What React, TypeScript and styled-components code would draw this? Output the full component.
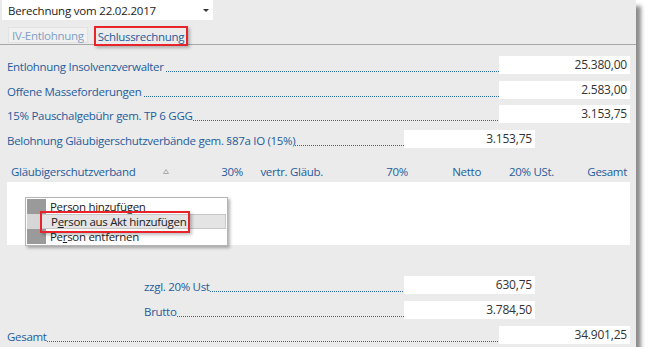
import styled, { createGlobalStyle } from 'styled-components'

const GlobalStyle = createGlobalStyle`
  body {
    margin: 0;
    background: #ffffff;
    font-family: "Open Sans", "Liberation Sans", sans-serif;
    font-size: 11.5px;
    letter-spacing: -0.3px;
  }
`

const Window = styled.div`
  width: 636px;
  height: 347px;
  background: #ebebeb;
  box-shadow: 5px 6px 4px rgba(0, 0, 0, 0.45);
  display: flex;
  flex-direction: column;
`

const Select = styled.div`
  margin-left: 2px;
  width: 211px;
  height: 20px;
  background: #ffffff;
  display: flex;
  align-items: center;
  justify-content: space-between;
  padding: 0 4px 0 6px;
  box-sizing: border-box;
  color: #222;
  letter-spacing: -0.2px;
`

const Caret = styled.span`
  width: 0;
  height: 0;
  border-left: 3px solid transparent;
  border-right: 3px solid transparent;
  border-top: 3px solid #333;
`

const TabBar = styled.div`
  margin-top: 6px;
  height: 18px;
  border-bottom: 1px solid #a8a8a8;
  display: flex;
  align-items: flex-start;
  gap: 6px;
  padding-left: 8px;
`

const Tab = styled.div<{ $active?: boolean }>`
  height: ${p => (p.$active ? '20px' : '16px')};
  margin-top: ${p => (p.$active ? '0' : '1px')};
  padding: 0 ${p => (p.$active ? '2px' : '3px')};
  box-sizing: border-box;
  display: flex;
  align-items: center;
  color: ${p => (p.$active ? '#1f5c9c' : '#7f9fc2')};
  background: ${p => (p.$active ? '#ebebeb' : '#f1f1f1')};
  border: ${p => (p.$active ? '2px solid #e8232a' : '1px solid #e2e2e2')};
  box-shadow: ${p => (p.$active ? '2px 2px 3px rgba(0,0,0,0.25)' : 'none')};
  position: relative;
  z-index: 1;
`

const Content = styled.div`
  padding: 11px 6px 0 7px;
  display: flex;
  flex-direction: column;
`

const Rows = styled.div<{ $gap: number; $top?: number }>`
  display: flex;
  flex-direction: column;
  gap: ${p => p.$gap}px;
  margin-top: ${p => p.$top ?? 0}px;
`

const Row = styled.div<{ $indent?: number; $short?: boolean }>`
  display: flex;
  align-items: flex-end;
  height: 18px;
  padding-left: ${p => p.$indent ?? 0}px;
  margin-right: ${p => (p.$short ? '95px' : '0')};
`

const Label = styled.span`
  color: #1f5c9c;
  line-height: 15px;
  white-space: pre;
`

const Leader = styled.span`
  flex: 1;
  height: 1px;
  margin-bottom: 2px;
  background: repeating-linear-gradient(to right, #2f6aa8 0 1px, transparent 1px 2px);
`

const Value = styled.div`
  width: 131px;
  height: 18px;
  background: #ffffff;
  color: #333;
  font-size: 12px;
  letter-spacing: -0.2px;
  text-align: right;
  line-height: 18px;
  padding-right: 3px;
  box-sizing: border-box;
`

const Header = styled.div`
  margin-top: 14px;
  height: 20px;
  display: grid;
  grid-template-columns: 150px 30px 56px 80px 85px 73px 73px 73px;
  color: #1f5c9c;
  line-height: 20px;
  margin-right: 3px;
`

const HeadCell = styled.div<{ $left?: boolean }>`
  text-align: ${p => (p.$left ? 'left' : 'right')};
  padding-left: ${p => (p.$left ? '4px' : '0')};
  white-space: nowrap;
`

const SortCell = styled.div`
  display: flex;
  align-items: center;
  padding-left: 6px;
`

const TableBody = styled.div`
  height: 63px;
  background: #ffffff;
  position: relative;
`

const Menu = styled.div`
  position: absolute;
  left: 18px;
  top: 15px;
  width: 203px;
  padding: 1px;
  box-sizing: border-box;
  background: #ffffff;
  border: 1px solid #b5b5b5;
  box-shadow: 2px 2px 3px rgba(0, 0, 0, 0.3);
  display: flex;
  flex-direction: column;
`

const MenuItem = styled.div`
  height: 15px;
  display: flex;
  align-items: center;
  color: #222;
`

const MenuIcon = styled.span<{ $hover?: boolean }>`
  width: 19px;
  height: 15px;
  background: ${p => (p.$hover ? '#d6d6d6' : '#9a9a9a')};
  margin-right: ${p => (p.$hover ? '0' : '4px')};
  flex: none;
`

const MenuText = styled.span<{ $hover?: boolean }>`
  flex: 1;
  height: 15px;
  line-height: 13px;
  padding-left: ${p => (p.$hover ? '10px' : '0')};
  margin-left: ${p => (p.$hover ? '-6px' : '0')};
  background: ${p => (p.$hover ? '#e4e4e4' : 'transparent')};
  border: ${p => (p.$hover ? '1px solid #c8c8c8' : 'none')};
  box-sizing: border-box;
  display: flex;
  align-items: center;
  white-space: pre;
`

const Marked = styled.span`
  position: relative;
  &::after {
    content: '';
    position: absolute;
    left: -11px;
    right: -4px;
    top: -4px;
    bottom: -5px;
    border: 2px solid #e8232a;
    box-shadow: 2px 2px 3px rgba(0, 0, 0, 0.25);
  }
`

const rowsTop = [
  { label: 'Entlohnung Insolvenzverwalter ', value: '25.380,00' },
  { label: 'Offene Masseforderungen ', value: '2.583,00' },
  { label: '15% Pauschalgebühr gem. TP 6 GGG', value: '3.153,75' },
  { label: 'Belohnung Gläubigerschutzverbände gem. §87a IO (15%)', value: '3.153,75', short: true },
]

function SortIcon() {
  return (
    <svg width="6" height="5" viewBox="0 0 6 5">
      <path d="M3 0.5 L5.5 4.5 L0.5 4.5 Z" fill="none" stroke="#9a9a9a" strokeWidth="0.8" />
    </svg>
  )
}

export default function App() {
  return (
    <>
      <GlobalStyle />
      <Window>
        <Select>
          <span>Berechnung vom 22.02.2017</span>
          <Caret />
        </Select>
        <TabBar>
          <Tab>IV-Entlohnung</Tab>
          <Tab $active>Schlussrechnung</Tab>
        </TabBar>
        <Content>
          <Rows $gap={6.5}>
            {rowsTop.map(r => (
              <Row key={r.label} $short={r.short}>
                <Label>{r.label}</Label>
                <Leader />
                <Value>{r.value}</Value>
              </Row>
            ))}
          </Rows>
          <Header>
            <HeadCell $left>Gläubigerschutzverband</HeadCell>
            <SortCell>
              <SortIcon />
            </SortCell>
            <HeadCell>30%</HeadCell>
            <HeadCell>vertr. Gläub.</HeadCell>
            <HeadCell>70%</HeadCell>
            <HeadCell>Netto</HeadCell>
            <HeadCell>20% USt.</HeadCell>
            <HeadCell>Gesamt</HeadCell>
          </Header>
          <TableBody>
            <Menu>
              <MenuItem>
                <MenuIcon />
                <MenuText>Person hinzufügen</MenuText>
              </MenuItem>
              <MenuItem>
                <MenuIcon $hover />
                <MenuText $hover>
                  <Marked>
                    P<u>e</u>rson aus Akt hinzufügen
                  </Marked>
                </MenuText>
              </MenuItem>
              <MenuItem>
                <MenuIcon />
                <MenuText>
                  Pe<u>r</u>son entfernen
                </MenuText>
              </MenuItem>
            </Menu>
          </TableBody>
          <Rows $gap={7} $top={31}>
            <Row $indent={137} $short>
              <Label>zzgl. 20% Ust</Label>
              <Leader />
              <Value>630,75</Value>
            </Row>
            <Row $indent={137} $short>
              <Label>Brutto</Label>
              <Leader />
              <Value>3.784,50</Value>
            </Row>
            <Row>
              <Label>Gesamt</Label>
              <Leader />
              <Value>34.901,25</Value>
            </Row>
          </Rows>
        </Content>
      </Window>
    </>
  )
}
